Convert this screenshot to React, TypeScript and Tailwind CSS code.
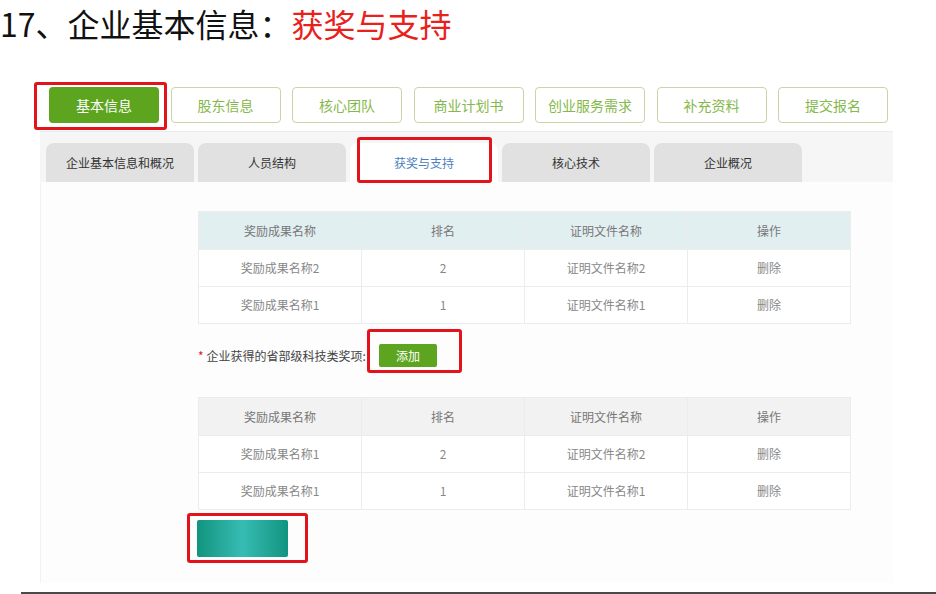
import React from 'react';

const font = { fontFamily: '"Noto Sans CJK SC", "Noto Sans", sans-serif' };

const navItems = ['基本信息', '股东信息', '核心团队', '商业计划书', '创业服务需求', '补充资料', '提交报名'];
const tabs = ['企业基本信息和概况', '人员结构', '获奖与支持', '核心技术', '企业概况'];
const headers = ['奖励成果名称', '排名', '证明文件名称', '操作'];

function AwardTable({ rows, headBg }: { rows: string[][]; headBg: string }) {
  return (
    <table className="w-[653px] table-fixed border-collapse bg-white">
      <thead>
        <tr className={headBg}>
          {headers.map((h) => (
            <th key={h} className="h-[38px] border border-[#ececec] text-[12px] font-normal text-[#777]">
              {h}
            </th>
          ))}
        </tr>
      </thead>
      <tbody>
        {rows.map((r, i) => (
          <tr key={i}>
            {r.map((c, j) => (
              <td key={j} className="h-[37px] border border-[#ececec] text-center text-[12px] text-[#888]">
                {c}
              </td>
            ))}
          </tr>
        ))}
      </tbody>
    </table>
  );
}

function RedBox({ className }: { className: string }) {
  return <div className={`absolute rounded-[3px] border-[3px] border-[#e2131b] ${className}`} />;
}

export default function App() {
  return (
    <div className="relative flex h-[594px] w-[936px] flex-col overflow-hidden bg-white" style={font}>
      <h1 className="h-[46px] text-[32px] leading-[46px] font-normal text-[#111]">
        17、企业基本信息：<span className="text-[#e8211c]">获奖与支持</span>
      </h1>

      <div className="ml-[40px] w-[853px]">
        {/* top step buttons */}
        <div className="mt-[41px] ml-[9px] flex gap-[11.5px]">
          {navItems.map((n, i) => (
            <div
              key={n}
              className={
                i === 0
                  ? 'flex h-[36px] w-[110px] items-center justify-center rounded-[4px] bg-[#5ea51f] text-[14px] text-white'
                  : 'flex h-[36px] w-[110px] items-center justify-center rounded-[4px] border border-[#cbd3a9] bg-white text-[14px] text-[#84b84a]'
              }
            >
              {n}
            </div>
          ))}
        </div>

        {/* sub tabs */}
        <div className="mt-[8px] flex h-[51px] items-end gap-[4px] border-t border-[#ececec] bg-[#f6f6f6] pl-[6px]">
          {tabs.map((t, i) => (
            <div
              key={t}
              className={
                i === 2
                  ? 'flex h-[39px] w-[148px] items-center justify-center rounded-t-[8px] bg-white text-[12px] text-[#4b7fc2]'
                  : 'flex h-[39px] w-[148px] items-center justify-center rounded-t-[8px] bg-[#e1e1e1] text-[12px] text-[#333]'
              }
            >
              {t}
            </div>
          ))}
        </div>

        {/* content */}
        <div className="flex h-[401px] flex-col border-l border-[#f2f2f2] bg-[#fdfdfd] pl-[157px] pt-[29px]">
          <AwardTable
            headBg="bg-[#e2eff1]"
            rows={[
              ['奖励成果名称2', '2', '证明文件名称2', '删除'],
              ['奖励成果名称1', '1', '证明文件名称1', '删除'],
            ]}
          />

          <div className="mt-[20px] flex items-center">
            <span className="text-[12px] text-[#e2131b]">*</span>
            <span className="ml-[3px] text-[12px] text-[#444]">企业获得的省部级科技类奖项:</span>
            <div className="ml-[13px] flex h-[23px] w-[58px] items-center justify-center rounded-[2px] bg-[#5ea51f] text-[12px] text-white">
              添加
            </div>
          </div>

          <div className="mt-[30px]">
            <AwardTable
              headBg="bg-[#f2f2f2]"
              rows={[
                ['奖励成果名称1', '2', '证明文件名称2', '删除'],
                ['奖励成果名称1', '1', '证明文件名称1', '删除'],
              ]}
            />
          </div>

          <div className="mt-[10px] -ml-[1px] h-[37px] w-[91px] rounded-[2px] bg-gradient-to-r from-[#10947f] via-[#36bcb3] to-[#10947f]" />
        </div>
      </div>

      <div className="mt-[9px] ml-[21px] h-[2px] bg-[#4a4a4a]" />

      <RedBox className="left-[34px] top-[82px] h-[48px] w-[133px]" />
      <RedBox className="left-[357px] top-[137px] h-[46px] w-[135px]" />
      <RedBox className="left-[367px] top-[329px] h-[44px] w-[95px]" />
      <RedBox className="left-[187px] top-[513px] h-[50px] w-[121px]" />
    </div>
  );
}
